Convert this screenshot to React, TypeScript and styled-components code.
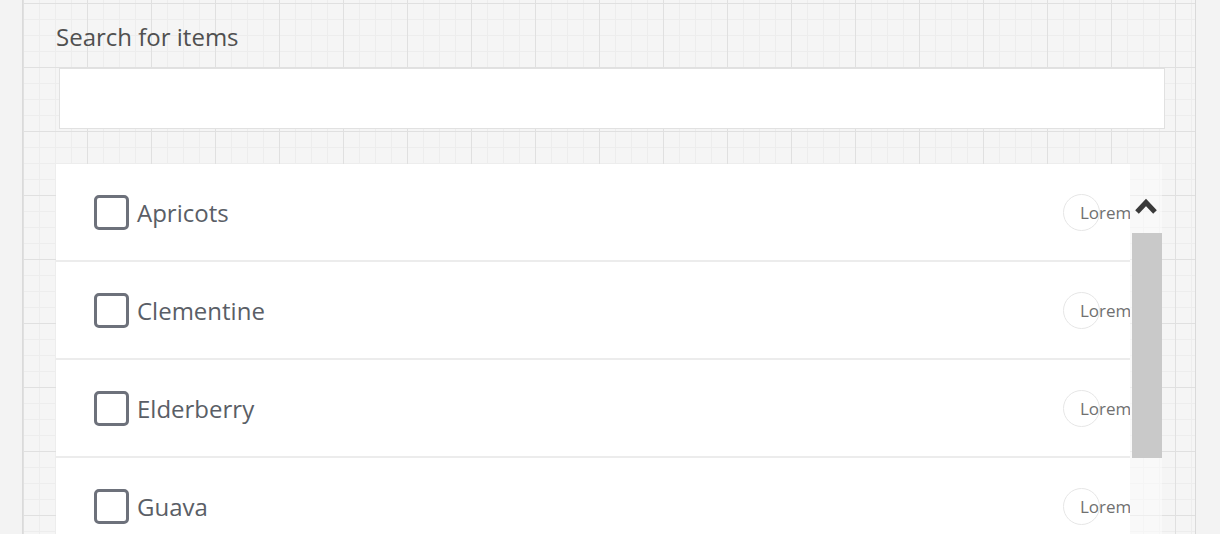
import styled, { createGlobalStyle } from "styled-components";

const fruits = ["Apricots", "Clementine", "Elderberry", "Guava"];

const GlobalStyle = createGlobalStyle`
  html, body {
    margin: 0;
    padding: 0;
    height: 534px;
    overflow: hidden;
    background: #f3f3f3;
    font-family: "Open Sans", "Noto Sans", sans-serif;
  }
`;

export default function App() {
  return (
    <>
      <GlobalStyle />
      <Frame>
        <Label>Search for items</Label>
        <SearchInput type="text" />
        <ListBox>
          <Rows>
            {fruits.map((name) => (
              <Row key={name}>
                <Check>
                  <Box />
                  <ItemName>{name}</ItemName>
                </Check>
                <Tag>
                  <Ring />
                  <TagText>Lorem</TagText>
                </Tag>
              </Row>
            ))}
          </Rows>
          <Scrollbar>
            <ArrowUp>
              <svg width="24" height="18" viewBox="0 0 24 18">
                <polyline points="3,15 12,5.5 21,15" fill="none" stroke="#3a3a3a" strokeWidth="5" strokeLinejoin="miter" />
              </svg>
            </ArrowUp>
            <Thumb />
          </Scrollbar>
        </ListBox>
      </Frame>
    </>
  );
}

const Frame = styled.main`
  margin-left: 22px;
  width: 1174px;
  height: 534px;
  box-sizing: border-box;
  padding: 21px 0 0 33px;
  border-left: 1px solid #dadada;
  border-right: 1px solid #dadada;
  overflow: hidden;
  background-color: #f5f5f5;
  background-image:
    linear-gradient(to right, #e0e0e0 1px, transparent 1px),
    linear-gradient(to bottom, #e0e0e0 1px, transparent 1px),
    linear-gradient(to right, #ededed 1px, transparent 1px),
    linear-gradient(to bottom, #ededed 1px, transparent 1px);
  background-size: 64px 64px, 64px 64px, 16px 16px, 16px 16px;
  background-position: 0 3px, 0 3px, 0 3px, 0 3px;
`;

const Label = styled.div`
  font-size: 24px;
  line-height: 32px;
  color: #505050;
`;

const SearchInput = styled.input`
  display: block;
  margin: 15px 0 0 3px;
  width: 1106px;
  height: 61px;
  box-sizing: border-box;
  border: 1px solid #e1e1e1;
  background: #fff;
  outline: none;
`;

const ListBox = styled.section`
  display: flex;
  margin-top: 35px;
  width: 1106px;
`;

const Rows = styled.div`
  width: 1074px;
  background: #fff;
  overflow: hidden;
`;

const Row = styled.div`
  height: 96px;
  border-bottom: 2px solid #ececec;
  display: flex;
  align-items: center;
  justify-content: space-between;
  padding-left: 38px;
`;

const Check = styled.label`
  display: flex;
  align-items: center;
  gap: 8px;
`;

const Box = styled.span`
  width: 35px;
  height: 35px;
  box-sizing: border-box;
  border: 3px solid #6d717b;
  border-radius: 5px;
`;

const ItemName = styled.span`
  font-size: 24px;
  color: #5a5e66;
`;

const Tag = styled.div`
  display: flex;
  align-items: center;
  width: 67px;
  overflow: hidden;
  white-space: nowrap;
`;

const Ring = styled.span`
  flex: none;
  width: 37px;
  height: 37px;
  box-sizing: border-box;
  border: 1.5px solid #e6e6e6;
  border-radius: 50%;
  margin-right: -20px;
`;

const TagText = styled.span`
  font-size: 17px;
  color: #707070;
`;

const Scrollbar = styled.div`
  width: 32px;
  background: rgba(255, 255, 255, 0.45);
  display: flex;
  flex-direction: column;
  align-items: center;
`;

const ArrowUp = styled.div`
  height: 69px;
  padding-top: 33px;
  box-sizing: border-box;
  svg {
    display: block;
  }
`;

const Thumb = styled.div`
  width: 30px;
  margin-left: 2px;
  height: 225px;
  background: #c9c9c9;
`;
